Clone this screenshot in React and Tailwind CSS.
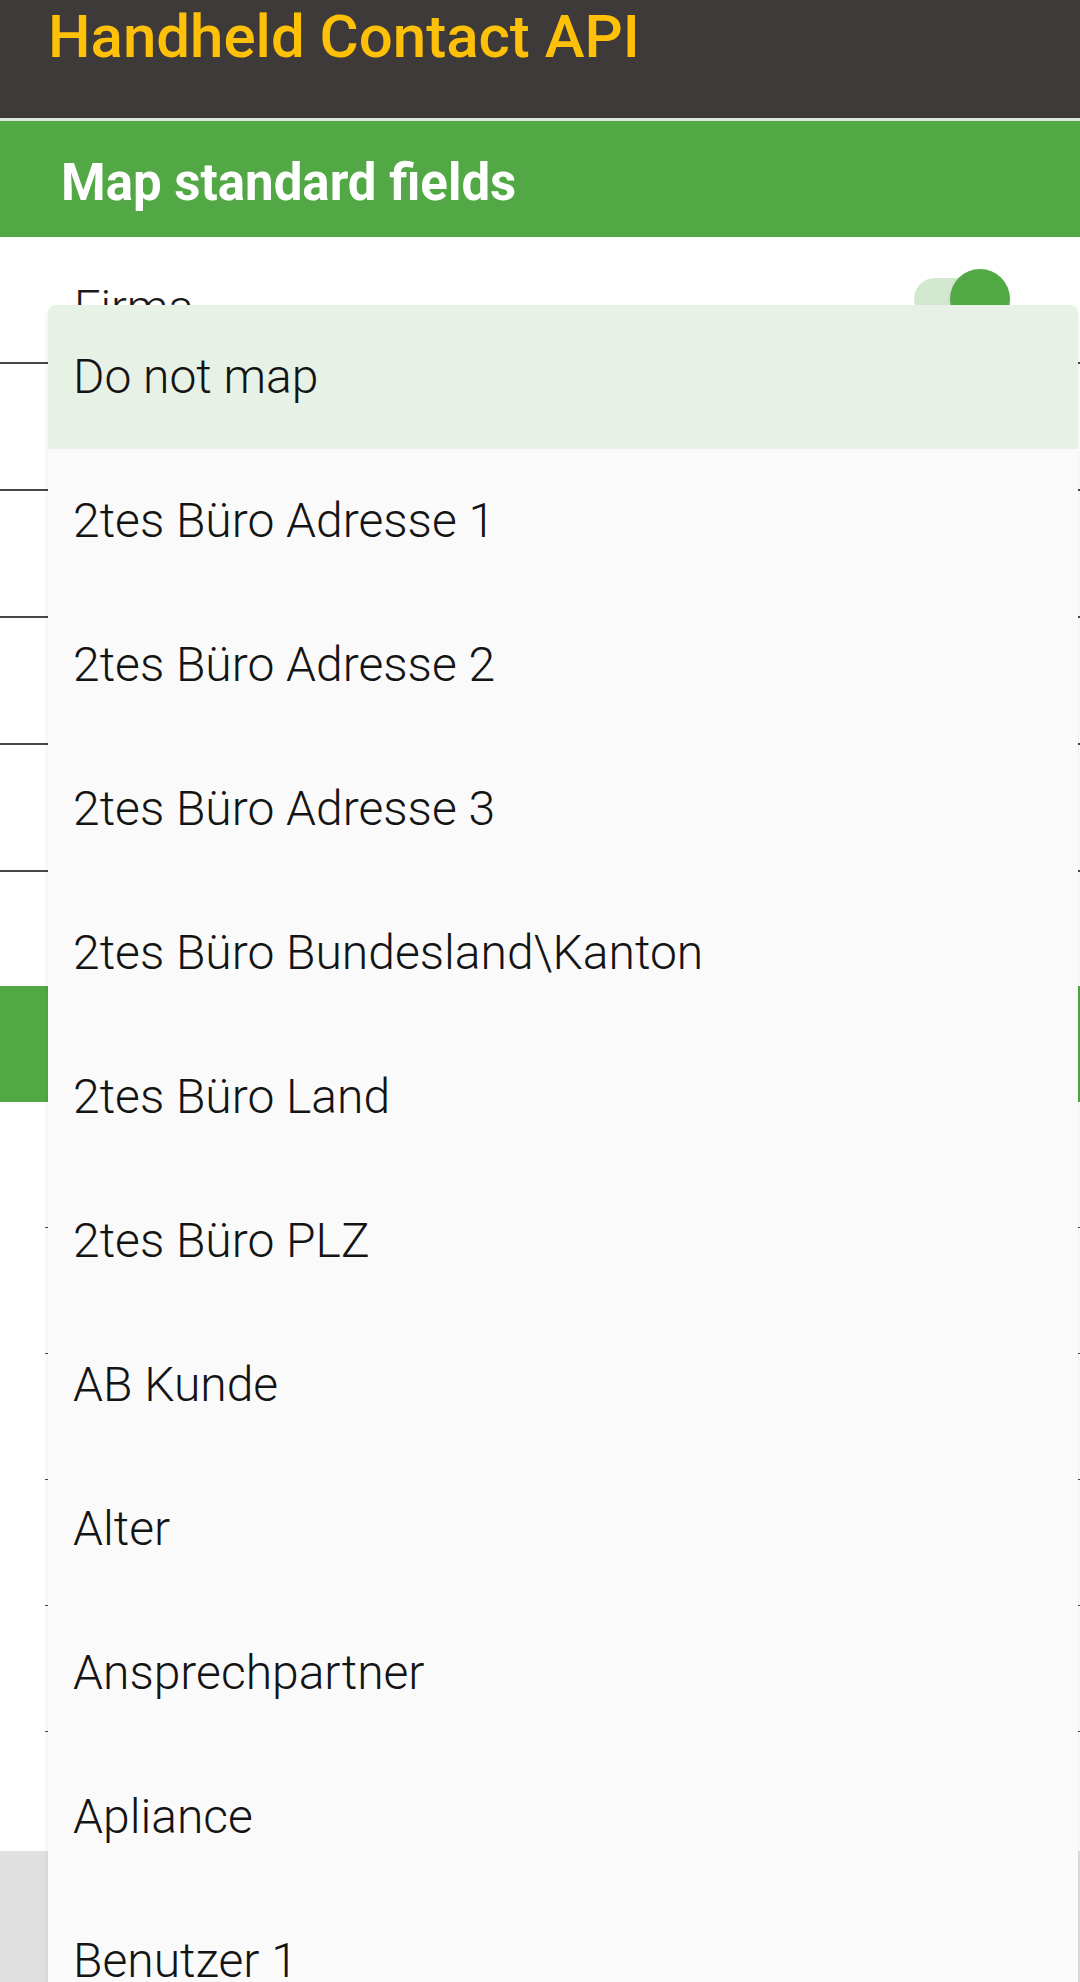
const topRows = ["Firma", "", "", "", ""];
const bottomRows = [0, 1, 2, 3, 4];

const options = [
  "Do not map",
  "2tes Büro Adresse 1",
  "2tes Büro Adresse 2",
  "2tes Büro Adresse 3",
  "2tes Büro Bundesland\\Kanton",
  "2tes Büro Land",
  "2tes Büro PLZ",
  "AB Kunde",
  "Alter",
  "Ansprechpartner",
  "Apliance",
  "Benutzer 1",
];

const font = { fontFamily: "Roboto, 'Noto Sans', sans-serif" };

const Toggle = () => (
  <div className="relative w-[96px] h-[60px] flex items-center">
    <div className="w-[96px] h-[42px] rounded-full bg-[#d2e8cf]" />
    <div className="absolute right-0 top-0 w-[60px] h-[60px] rounded-full bg-[#53a846] shadow-md" />
  </div>
);

export default function App() {
  return (
    <div className="relative w-[1080px] h-[1982px] overflow-hidden bg-white" style={font}>
      <header className="h-[118px] bg-[#3e3a3a] pl-[48px] pt-[7px]">
        <h1 className="text-[60px] leading-none font-medium text-[#ffc107]">Handheld Contact API</h1>
      </header>
      <div className="h-[3px] bg-[#dde6da]" />
      <div className="h-[116px] bg-[#53a846] pl-[61px] pt-[36px]">
        <h2 className="text-[51px] leading-none font-bold text-white">Map standard fields</h2>
      </div>

      {/* rows under the open menu */}
      <div>
        {topRows.map((r, i) => (
          <div key={i} className="h-[127px] border-b-2 border-[#474747] flex items-start justify-between pl-[74px] pr-[70px] pt-[32px]">
            <span className="text-[47px] font-light text-[#1a1a1a] leading-none mt-[14px]">{r}</span>
            {i === 0 && <Toggle />}
          </div>
        ))}
      </div>

      <div className="h-[114px]" />

      <div className="h-[116px] bg-[#53a846]" />

      <div>
        {bottomRows.map((r) => (
          <div key={r} className="ml-[45px] h-[126px] border-b border-[#474747]" />
        ))}
      </div>

      <div className="h-[119px]" />
      <div className="h-[200px] bg-[#e0e0e0]" />

      <div className="absolute left-[48px] top-[305px] w-[1030px] rounded-lg overflow-hidden bg-[#fafafa] shadow-md">
        {options.map((o, i) => (
          <div
            key={o}
            className={`h-[144px] flex items-center pl-[25px] ${i === 0 ? "bg-[#e7f1e6]" : ""}`}
          >
            <span className="text-[48px] font-light text-[#141414] leading-none">{o}</span>
          </div>
        ))}
      </div>
    </div>
  );
}
